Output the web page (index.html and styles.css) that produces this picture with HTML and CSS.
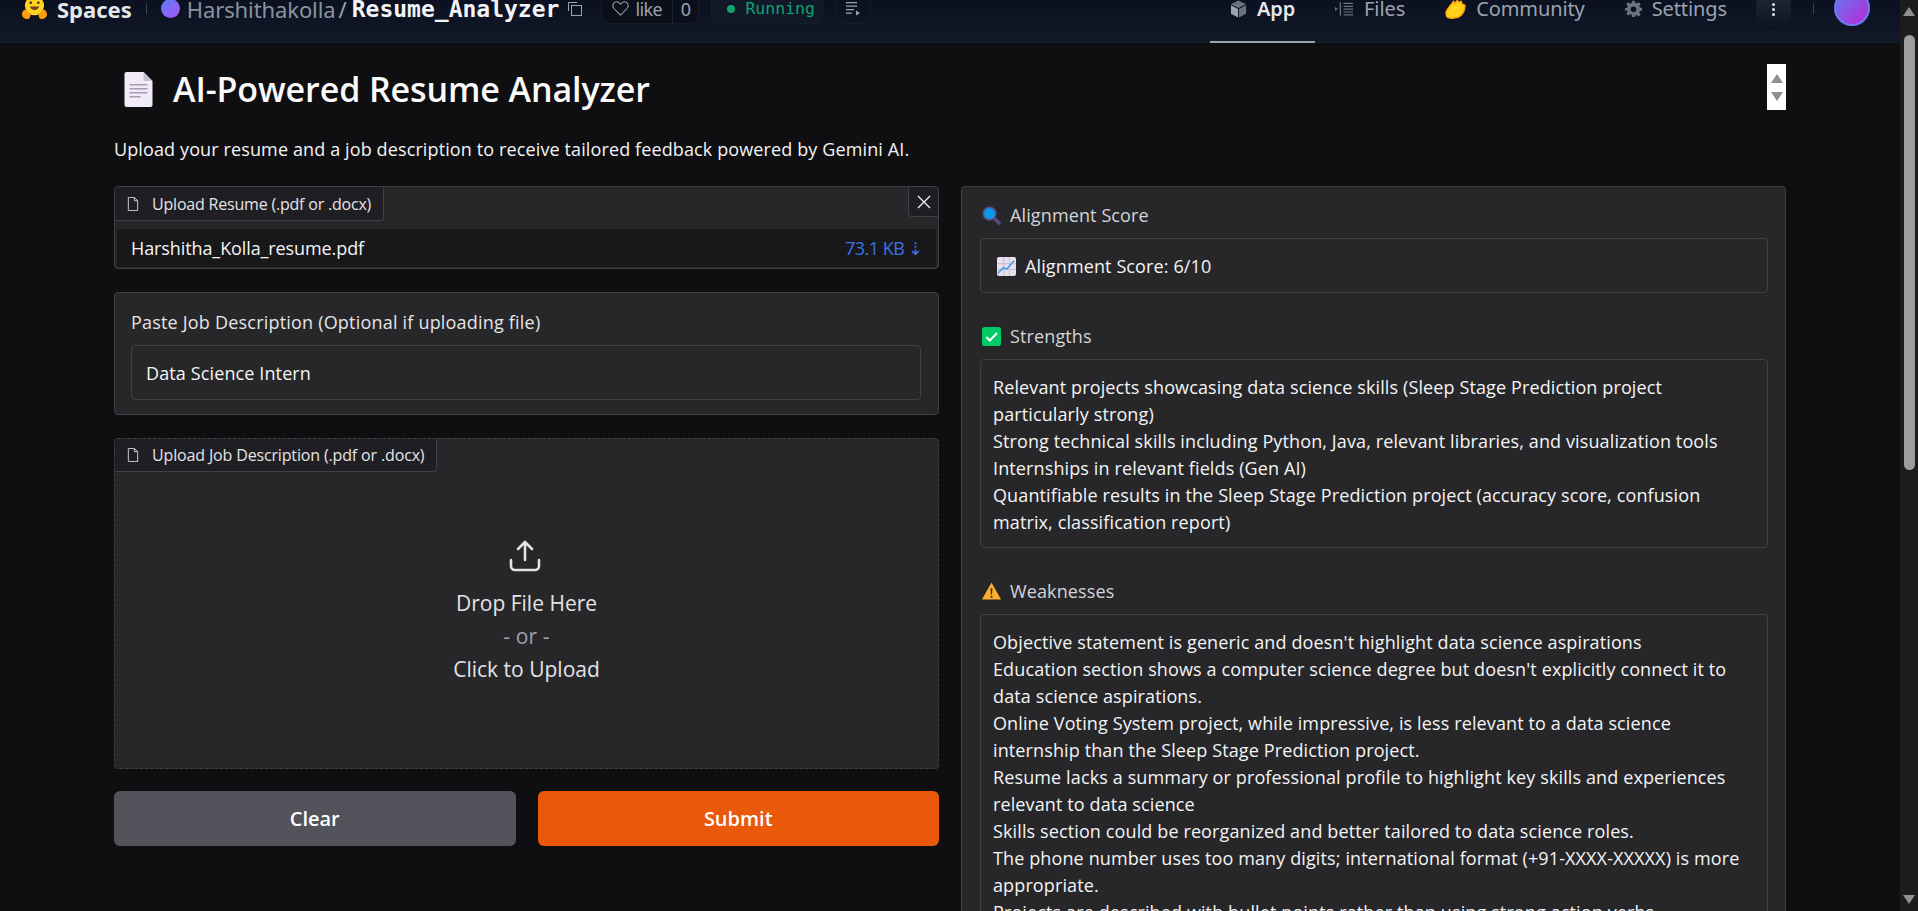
FILE: index.html
```html
<!DOCTYPE html>
<html lang="en">
<head>
  <meta charset="UTF-8" />
  <title>Resume Analyzer</title>
  <link rel="stylesheet" href="styles.css">
</head>
<body>
<div class="window">
  <div class="page">

    <!-- Top nav -->
    <header class="nav">
      <div class="nav-left">
        <svg class="hf-logo" viewBox="0 0 28 24" width="27" height="23">
          <circle cx="14" cy="9" r="10" fill="#ffd21e"/>
          <path d="M1 18c0-4 3-6 5-4l4 4-1 4c-2 2-8 1-8-4zM27 18c0-4-3-6-5-4l-4 4 1 4c2 2 8 1 8-4z" fill="#ff9d0b"/>
          <circle cx="10" cy="6" r="1.4" fill="#32343d"/><circle cx="18" cy="6" r="1.4" fill="#32343d"/>
          <path d="M9 10c2 5 8 5 10 0z" fill="#7a3b2e"/>
        </svg>
        <span class="brand">Spaces</span>
        <span class="sep"></span>
        <span class="user-dot"></span>
        <span class="owner">Harshithakolla</span>
        <span class="slash">/</span>
        <span class="repo">Resume_Analyzer</span>
        <svg class="copy-icon" viewBox="0 0 14 14" width="14" height="14" fill="none" stroke="#9ca3af" stroke-width="1">
          <rect x="3.5" y="3.5" width="10" height="10"/>
          <path d="M.5 9V.5H9"/>
        </svg>
        <div class="like-btn">
          <span class="like-main">
            <svg viewBox="0 0 18 16" width="17" height="15" fill="none" stroke="#9ca3af" stroke-width="1.1"><path d="M9 15L2 8C-1 4 3-1 7 1.500L9 3.500L11 1.500C15-1 19 4 16 8z"/></svg>
            like
          </span>
          <span class="like-count">0</span>
        </div>
        <div class="status-pill"><span class="status-dot"></span>Running</div>
        <div class="small-btn">
          <svg viewBox="0 0 16 16" width="16" height="16" fill="#9ca3af"><path d="M1 1h11v1.300H1zM1 4.500h11v1.300H1zM1 8h8v1.300H1zM1 11.500h6v1.300H1zM11 9.500l4 2.500-4 2.500z"/></svg>
        </div>
      </div>
      <nav class="nav-right">
        <a class="tab active">
          <svg viewBox="0 0 18 18" width="17" height="18"><path d="M9 0l8 4-8 4-8-4z" fill="#6b7280"/><path d="M1 5l7.500 4v9L1 14z" fill="#9ca3af"/><path d="M17 5L9.500 9v9l7.500-4z" fill="#6b7280"/></svg>
          App
        </a>
        <a class="tab">
          <svg viewBox="0 0 20 14" width="19" height="14" fill="#6b7280"><path d="M0 5l3 2-3 2zM5 0h1.300v14H5zM9 .5h10v1.300H9zM9 3.500h10v1.300H9zM9 6.500h10v1.300H9zM9 9.500h10v1.300H9zM9 12.500h10v1.300H9z"/></svg>
          Files
        </a>
        <a class="tab">
          <svg viewBox="0 0 22 20" width="21" height="20"><path d="M2 18C-1 13 3 10 5 7l4-5 1 2 3-3 1 2 3-1 1 3 3 1c0 6-3 12-9 13-4 1-8 1-10-1z" fill="#ffd21e" stroke="#ff9d0b" stroke-width="1.500"/></svg>
          Community
        </a>
        <a class="tab">
          <svg viewBox="0 0 24 24" width="17" height="17" fill="#6b7280"><path fill-rule="evenodd" d="M10 1h4l.6 3.200 2 .9L19.400 3l2.800 2.800-2.100 2.800.9 2 3.200.6v4l-3.200.6-.9 2 2.100 2.800-2.800 2.800-2.800-2.100-2 .9L14 24h-4l-.6-3.200-2-.9L4.600 22l-2.800-2.800 2.100-2.800-.9-2L0 15.600v-4l3-.6.900-2L1.800 5.800 4.600 3l2.800 2.100 2-.9zM12 9a4 4 0 100 8 4 4 0 000-8z"/></svg>
          Settings
        </a>
        <div class="more-btn"><i></i><i></i><i></i></div>
        <span class="sep sep-right"></span>
        <span class="avatar"></span>
      </nav>
    </header>

    <main class="content">
      <div class="title-row">
        <div class="title-text">
          <h1><span class="doc-emoji">
            <svg viewBox="0 0 28 35" width="29" height="35"><path d="M2 0h17l9 9v24a2 2 0 01-2 2H2a2 2 0 01-2-2V2a2 2 0 012-2z" fill="#f1ebf8"/><path d="M19 0l9 9h-9z" fill="#c9bdd6"/><path d="M5 12h18v1.500H5zM5 16h18v1.500H5zM5 20h18v1.500H5zM5 24h11v1.500H5z" fill="#a99bb8"/></svg>
          </span>AI-Powered Resume Analyzer</h1>
          <p class="desc">Upload your resume and a job description to receive tailored feedback powered by Gemini AI.</p>
        </div>
        <div class="mini-scroll"><span class="arrow-up"></span><span class="arrow-down"></span></div>
      </div>

      <div class="columns">
        <!-- Left column -->
        <section class="col">
          <div class="block file-block">
            <div class="file-head">
              <span class="file-label">
                <svg class="file-icon" viewBox="0 0 12 15" width="12" height="14" fill="none" stroke="#d4d4d8"><path d="M1 .5h6.500L11 4v10.500H1zM7.500.5V4H11"/></svg>
                Upload Resume (.pdf or .docx)
              </span>
              <span class="close-btn">
                <svg viewBox="0 0 14 14" width="14" height="14" stroke="#f4f4f5" stroke-width="1.300"><path d="M1 1l12 12M13 1L1 13"/></svg>
              </span>
            </div>
            <div class="file-row">
              <span class="file-name">Harshitha_Kolla_resume.pdf</span>
              <span class="file-size">73.1 KB ⇣</span>
            </div>
          </div>

          <div class="block text-block">
            <div class="field-label">Paste Job Description (Optional if uploading file)</div>
            <div class="input-box">Data Science Intern</div>
          </div>

          <div class="block drop-block">
            <span class="file-label drop-label">
              <svg class="file-icon" viewBox="0 0 12 15" width="12" height="14" fill="none" stroke="#d4d4d8"><path d="M1 .5h6.500L11 4v10.500H1zM7.500.5V4H11"/></svg>
              Upload Job Description (.pdf or .docx)
            </span>
            <div class="drop-area">
              <svg class="upload-icon" viewBox="0 0 32 32" width="32" height="32" fill="none" stroke="#e4e4e7" stroke-width="2.600" stroke-linecap="round" stroke-linejoin="round">
                <path d="M16 20V2M9 9l7-7 7 7M2 20v6a4 4 0 004 4h20a4 4 0 004-4v-6" />
              </svg>
              <div class="drop-text">Drop File Here</div>
              <div class="drop-or">- or -</div>
              <div class="drop-text">Click to Upload</div>
            </div>
          </div>

          <div class="btn-row">
            <button class="btn btn-clear">Clear</button>
            <button class="btn btn-submit">Submit</button>
          </div>
        </section>

        <!-- Right column -->
        <section class="col-right">
          <div class="out-label">
            <svg viewBox="0 0 20 20" width="19" height="19"><path d="M12 12l6 6" stroke="#5c4a8a" stroke-width="3.500" stroke-linecap="round"/><circle cx="8" cy="8" r="7.500" fill="#5c4a8a"/><circle cx="8" cy="8" r="5.800" fill="#0a9ae8"/></svg>
            Alignment Score
          </div>
          <div class="out-box score-box">
            <svg viewBox="0 0 20 20" width="19" height="19"><rect width="20" height="20" rx="2" fill="#e8e0ee"/><path d="M0 7h20M0 13h20M7 0v20M13 0v20" stroke="#c6bad2" stroke-width="1"/><path d="M1 17l6-6 3 2 8-9" fill="none" stroke="#3f9be8" stroke-width="1.600"/></svg>
            Alignment Score: 6/10
          </div>

          <div class="out-label label-gap">
            <svg viewBox="0 0 20 20" width="19" height="19"><rect width="20" height="20" rx="3" fill="#00cc66"/><path d="M4.500 10.500l3.800 3.800 7.500-8" fill="none" stroke="#fff" stroke-width="2.200"/></svg>
            Strengths
          </div>
          <div class="out-box">
            <p>Relevant projects showcasing data science skills (Sleep Stage Prediction project particularly strong)</p>
            <p>Strong technical skills including Python, Java, relevant libraries, and visualization tools</p>
            <p>Internships in relevant fields (Gen AI)</p>
            <p>Quantifiable results in the Sleep Stage Prediction project (accuracy score, confusion matrix, classification report)</p>
          </div>

          <div class="out-label label-gap">
            <svg viewBox="0 0 20 18" width="19" height="18"><path d="M10 0l10 18H0z" fill="#fbb02d"/><path d="M9 6h2l-.4 7H9.400zM9 14.200h2V16H9z" fill="#33302a"/></svg>
            Weaknesses
          </div>
          <div class="out-box">
            <p>Objective statement is generic and doesn't highlight data science aspirations</p>
            <p>Education section shows a computer science degree but doesn't explicitly connect it to data science aspirations.</p>
            <p>Online Voting System project, while impressive, is less relevant to a data science internship than the Sleep Stage Prediction project.</p>
            <p>Resume lacks a summary or professional profile to highlight key skills and experiences relevant to data science</p>
            <p>Skills section could be reorganized and better tailored to data science roles.</p>
            <p>The phone number uses too many digits; international format (+91-XXXX-XXXXX) is more appropriate.</p>
            <p>Projects are described with bullet points rather than using strong action verbs.</p>
          </div>
        </section>
      </div>
    </main>
  </div>

  <!-- Window scrollbar -->
  <div class="scrollbar">
    <span class="arrow-up bar-up"></span>
    <span class="thumb"></span>
    <span class="arrow-down bar-down"></span>
  </div>
</div>
</body>
</html>
```

FILE: styles.css
```css
* {
  box-sizing: border-box;
}

html, body {
  margin: 0;
  height: 100%;
  overflow: hidden;
  background: #0f0f11;
}

body {
  font-family: "Open Sans", "Noto Sans", sans-serif;
  font-size: 18px;
  letter-spacing: 0.12px;
  color: #f4f4f5;
}

.window {
  display: flex;
  height: 911px;
}

.page {
  flex: 1;
  min-width: 0;
  overflow: hidden;
}

/* Nav */
.nav {
  height: 43px;
  padding: 0 0 25px 21px;
  display: flex;
  align-items: center;
  justify-content: space-between;
  background: linear-gradient(#0b1120, #111827);
  border-bottom: 1px solid #141b2a;
  font-family: "Noto Sans", sans-serif;
  letter-spacing: 0;
}

.nav-left, .nav-right {
  display: flex;
  align-items: center;
}

.hf-logo {
  margin-right: 9px;
}

.brand {
  font-size: 22px;
  font-weight: 700;
  color: #e5e7eb;
}

.sep {
  width: 1px;
  height: 11px;
  background: #374151;
  margin: 0 14px;
}

.user-dot {
  width: 19px;
  height: 19px;
  border-radius: 50%;
  background: linear-gradient(135deg, #5b7cf5, #a855f7);
  margin: 0 7px 0 0;
}

.owner {
  font-size: 22px;
  color: #8b93a1;
  letter-spacing: -0.1px;
}

.slash {
  font-size: 22px;
  color: #9ca3af;
  margin: 0 5px 0 3px;
}

.repo {
  font-family: "DejaVu Sans Mono", "Liberation Mono", monospace;
  font-size: 23px;
  font-weight: 700;
  color: #f3f4f6;
}

.copy-icon {
  margin: 0 19px 0 9px;
}

.like-btn {
  display: flex;
  align-items: center;
  height: 30px;
  width: 98px;
  border: 1px solid #151c2b;
  border-radius: 0 0 9px 9px;
  background: #0b0f19;
  color: #9ca3af;
  font-size: 18px;
}

.like-main {
  display: flex;
  align-items: center;
  gap: 6px;
  width: 71px;
  padding-left: 10px;
  height: 100%;
  border-right: 1px solid #1a2130;
  letter-spacing: -0.6px;
}

.like-count {
  flex: 1;
  text-align: center;
}

.status-pill {
  display: flex;
  align-items: center;
  height: 30px;
  margin-left: 12px;
  padding-left: 15px;
  width: 113px;
  background: #111827;
  border: 1px solid #151c2b;
  border-radius: 0 0 10px 10px;
  color: #10a36f;
  font-family: "DejaVu Sans Mono", monospace;
  font-size: 16.5px;
}

.status-dot {
  width: 8px;
  height: 8px;
  border-radius: 50%;
  background: #10a36f;
  margin-right: 10px;
  flex: none;
}

.small-btn {
  display: flex;
  align-items: center;
  justify-content: center;
  height: 30px;
  width: 36px;
  margin-left: 11px;
  border: 1px solid #151c2b;
  border-radius: 0 0 9px 9px;
}

.nav-right {
  height: 18px;
  padding-right: 30px;
}

.tab {
  position: relative;
  display: flex;
  align-items: center;
  gap: 10px;
  height: 18px;
  padding: 0 20px;
  font-size: 20px;
  letter-spacing: -0.1px;
  color: #9ca3af;
}

.tab.active {
  color: #e5e7eb;
  font-weight: 600;
}

.tab.active::after {
  content: "";
  position: absolute;
  left: 0;
  right: 0;
  top: 41px;
  height: 2px;
  background: #9ca3af;
}

.more-btn {
  display: flex;
  flex-direction: column;
  align-items: center;
  justify-content: center;
  gap: 2px;
  width: 35px;
  height: 32px;
  margin-left: 9px;
  padding-top: 2px;
  border-radius: 0 0 9px 9px;
  background: linear-gradient(#1f2937, #0f1624);
  border: 1px solid #151c2b;
}

.more-btn i {
  width: 3px;
  height: 3px;
  border-radius: 50%;
  background: #e5e7eb;
}

.sep-right {
  margin: 0 20px 0 22px;
}

.avatar {
  width: 36px;
  height: 36px;
  border-radius: 50%;
  margin-top: -2px;
  background: linear-gradient(135deg, #5b7cf5, #c026d3);
  border: 2px solid #6d7cf7;
}

/* Main */
.content {
  padding: 0 114px;
  width: 1900px;
}

.title-row {
  position: relative;
  height: 143px;
}

.title-text h1 {
  margin: 0;
  padding: 23px 0 0 10px;
  display: flex;
  align-items: center;
  font-size: 34px;
  line-height: 46px;
  font-weight: 600;
  letter-spacing: -0.1px;
  color: #fafafa;
}

.doc-emoji {
  display: flex;
  margin-right: 20px;
}

.desc {
  margin: 24px 0 0;
  line-height: 27px;
  color: #f4f4f5;
}

.mini-scroll {
  position: absolute;
  right: 0;
  top: 21px;
  width: 19px;
  height: 46px;
  background: #fff;
  display: flex;
  flex-direction: column;
  align-items: center;
  justify-content: space-around;
  padding: 5px 0;
}

.arrow-up {
  width: 0;
  height: 0;
  border-left: 6px solid transparent;
  border-right: 6px solid transparent;
  border-bottom: 9px solid #8f8f8f;
}

.arrow-down {
  width: 0;
  height: 0;
  border-left: 6px solid transparent;
  border-right: 6px solid transparent;
  border-top: 9px solid #8f8f8f;
}

.columns {
  display: flex;
  gap: 22px;
  align-items: flex-start;
}

.col {
  width: 825px;
  flex: none;
  display: flex;
  flex-direction: column;
  gap: 23px;
}

.block {
  background: #27272a;
  border: 1px solid #3f3f46;
  border-radius: 4px;
}

/* File blocks */
.file-block {
  height: 83px;
  overflow: hidden;
}

.file-head {
  display: flex;
  justify-content: space-between;
  align-items: flex-start;
  height: 42px;
}

.file-label {
  display: inline-flex;
  align-items: center;
  gap: 13px;
  height: 34px;
  padding: 0 12px;
  background: #1f1f23;
  border-right: 1px solid #3f3f46;
  border-bottom: 1px solid #3f3f46;
  border-radius: 0 0 4px 0;
  font-size: 16px;
  letter-spacing: -0.2px;
  color: #e4e4e7;
}

.close-btn {
  display: flex;
  align-items: center;
  justify-content: center;
  width: 30px;
  height: 30px;
  background: #1f1f23;
  border-left: 1px solid #3f3f46;
  border-bottom: 1px solid #3f3f46;
  border-radius: 0 0 0 4px;
}

.file-row {
  display: flex;
  justify-content: space-between;
  align-items: center;
  height: 38px;
  margin: 0 2px;
  padding: 0 13px 0 14px;
  background: #18181b;
}

.file-name {
  letter-spacing: -0.1px;
}

.file-size {
  color: #3b72e8;
  letter-spacing: -0.5px;
}

.text-block {
  height: 123px;
  padding: 16px 17px 0 16px;
}

.field-label {
  line-height: 26px;
  letter-spacing: 0.2px;
  color: #e4e4e7;
}

.input-box {
  margin-top: 10px;
  height: 55px;
  padding: 0 14px;
  display: flex;
  align-items: center;
  border: 1px solid #3f3f46;
  border-radius: 4px;
}

.drop-block {
  position: relative;
  height: 331px;
  border-style: dashed;
}

.drop-label {
  position: absolute;
  left: 0;
  top: 0;
  height: 33px;
  letter-spacing: -0.15px;
}

.drop-area {
  height: 100%;
  display: flex;
  flex-direction: column;
  align-items: center;
  padding-top: 101px;
}

.upload-icon {
  margin: 0 4px 15px 0;
}

.drop-text {
  font-size: 21px;
  line-height: 33px;
  letter-spacing: 0;
  color: #e4e4e7;
}

.drop-or {
  font-size: 21px;
  line-height: 33px;
  color: #a1a1aa;
}

.btn-row {
  display: flex;
  gap: 22px;
  margin-top: -1px;
}

.btn {
  flex: 1;
  height: 55px;
  border: none;
  border-radius: 6px;
  font-family: inherit;
  font-size: 20px;
  font-weight: 600;
  color: #fff;
}

.btn-clear {
  background: #52525b;
}

.btn-submit {
  background: #ea580c;
}

/* Output panel */
.col-right {
  width: 825px;
  flex: none;
  height: 800px;
  background: #27272a;
  border: 1px solid #3f3f46;
  border-radius: 4px;
  padding: 15px 17px 0 18px;
}

.out-label {
  display: flex;
  align-items: center;
  gap: 9px;
  height: 26px;
  padding-left: 2px;
  color: #d4d4d8;
}

.label-gap {
  margin-top: 30px;
}

.out-box {
  margin-top: 10px;
  padding: 14px 12px 11px;
  border: 1px solid #3f3f46;
  border-radius: 4px;
  line-height: 27px;
}

.out-box p {
  margin: 0;
}

.score-box {
  display: flex;
  align-items: center;
  gap: 9px;
  height: 55px;
  padding: 1px 12px 0 16px;
}

/* Scrollbar */
.scrollbar {
  position: relative;
  width: 18px;
  flex: none;
  background: #1c1c1c;
}

.bar-up {
  position: absolute;
  left: 3px;
  top: 7px;
}

.thumb {
  position: absolute;
  left: 4px;
  top: 35px;
  width: 11px;
  height: 435px;
  border-radius: 6px;
  background: #9e9e9e;
}

.bar-down {
  position: absolute;
  left: 3px;
  bottom: 7px;
}
```
